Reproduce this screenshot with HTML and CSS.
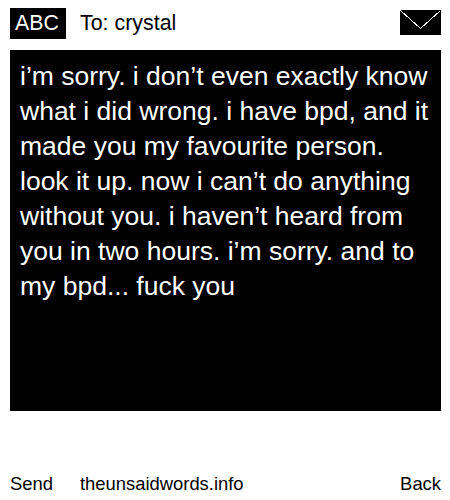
FILE: index.html
```
<!DOCTYPE html>
<html lang="en">
<head>
<meta charset="utf-8">
<title>The Unsaid Words</title>
<link rel="stylesheet" href="styles.css">
</head>
<body>
<div class="phone">
  <header class="top">
    <span class="abc">ABC</span>
    <span class="to">To: crystal</span>
    <svg class="env" width="41" height="25" viewBox="0 0 41 25" shape-rendering="crispEdges" aria-hidden="true"><rect width="41" height="25" fill="#000"/><path d="M0.5 0.5L20.5 18.5L40.5 0.5" fill="none" stroke="#fff" stroke-width="1"/></svg>
  </header>
  <main class="msg">i’m sorry. i don’t even exactly know what i did wrong. i have bpd, and it made you my favourite person. look it up. now i can’t do anything without you. i haven’t heard from you in two hours. i’m sorry. and to my bpd... fuck you</main>
  <footer class="bot">
    <span class="send">Send</span>
    <span class="site">theunsaidwords.info</span>
    <span class="back">Back</span>
  </footer>
</div>
</body>
</html>
```
FILE: styles.css
```
html, body { margin: 0; padding: 0; background: #fff; }
.phone {
  width: 431px;
  height: 500px;
  padding: 0 9px 0 10px;
  display: flex;
  flex-direction: column;
  font-family: "Liberation Sans", Arial, sans-serif;
  color: #000;
}
.top {
  height: 50px;
  display: flex;
  align-items: flex-start;
  flex: none;
}
.abc {
  margin-top: 8px;
  box-sizing: border-box;
  width: 56px;
  height: 31px;
  padding-left: 5px;
  background: #000;
  color: #fff;
  font-size: 21.3px;
  line-height: 31px;
  flex: none;
}
.to {
  margin-top: 8px;
  margin-left: 14px;
  font-size: 21.4px;
  line-height: 31px;
}
.env { margin-top: 10px; margin-left: auto; display: block; flex: none; }
.msg {
  height: 361px;
  box-sizing: border-box;
  background: #000;
  color: #fff;
  padding: 9px 10px;
  font-size: 26.5px;
  line-height: 35px;
  flex: none;
}
.bot {
  margin-top: 60px;
  display: flex;
  font-size: 18.4px;
  line-height: 26px;
}
.send { width: 70px; }
.back { margin-left: auto; }
```
